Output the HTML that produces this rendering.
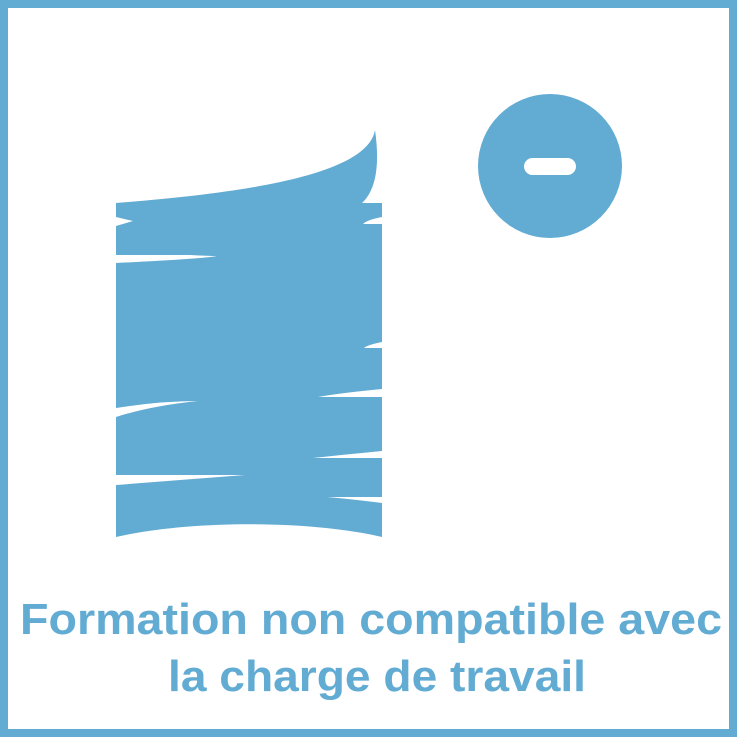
<!DOCTYPE html>
<html><head><style>
html,body{margin:0;padding:0;background:#fff;}
svg{display:block;}
</style></head><body>
<svg width="737" height="737" viewBox="0 0 737 737" xmlns="http://www.w3.org/2000/svg">
<rect x="4" y="4" width="729" height="729" fill="#fff" stroke="#62abd3" stroke-width="8"/>
<g fill="#62abd3">
<path d="M116,203 C260,192 368,172 375,130 C380,165 376,190 362,203 L382,203 L382,537 C320,522 200,518 116,537 Z"/>
<circle cx="550" cy="166" r="72"/>
</g>
<rect x="524" y="158" width="52" height="17" rx="8.5" fill="#fff"/>
<g fill="#fff">
<path d="M116,217 L133,221 L116,226 Z"/>
<path d="M382,217 C372,219 366,221 363,224 L382,224 Z"/>
<path d="M116,255 L190,255 Q210,256 217,256 Q200,259 116,263 Z"/>
<path d="M382,342 C372,344 366,346 364,348 L382,348 Z"/>
<path d="M382,389 Q340,393 318,397 L382,397 Z"/>
<path d="M116,408 Q160,401 198,401 Q150,406 116,417 Z"/>
<path d="M382,451 Q340,455 313,458 L382,458 Z"/>
<path d="M116,475 L245,475 Q180,480 116,485 Z"/>
<path d="M382,503 Q350,499 327,497 L382,497 Z"/>
</g>
<g fill="#62abd3" font-family="'Liberation Sans', sans-serif" font-weight="bold" font-size="44">
<text x="20" y="634" textLength="702" lengthAdjust="spacingAndGlyphs">Formation non compatible avec</text>
<text x="168" y="691" textLength="418" lengthAdjust="spacingAndGlyphs">la charge de travail</text>
</g>
</svg>
</body></html>
